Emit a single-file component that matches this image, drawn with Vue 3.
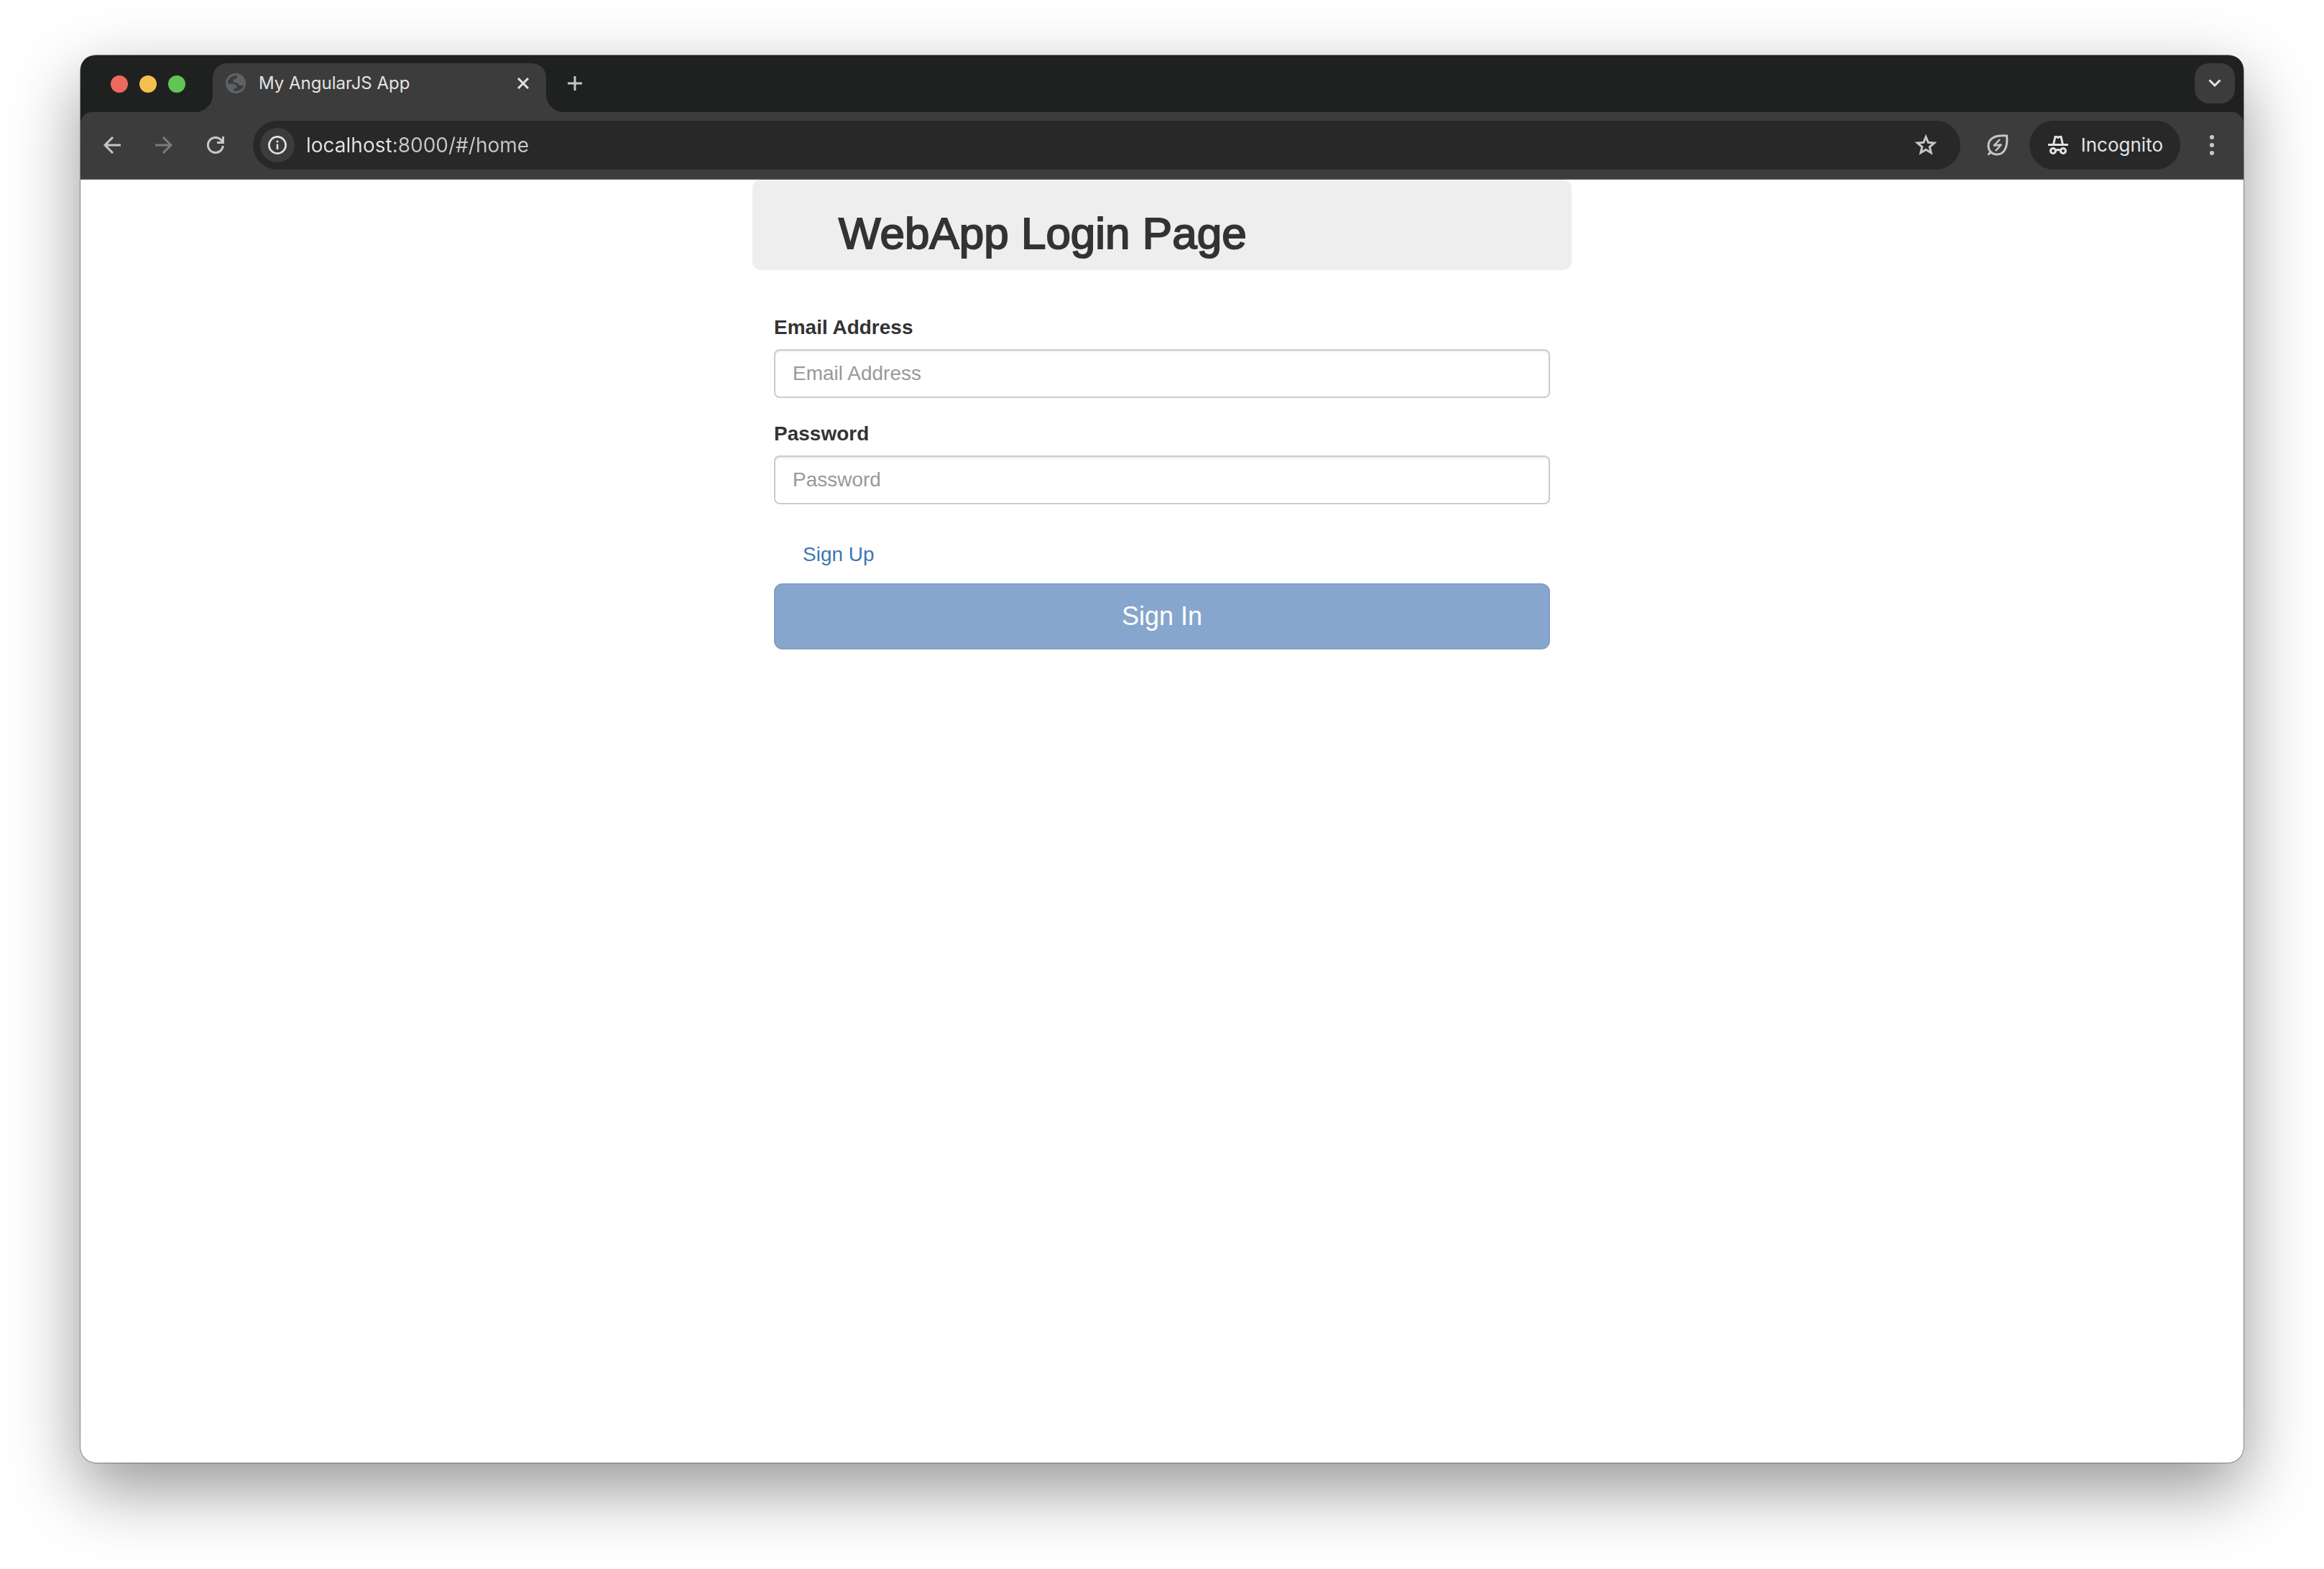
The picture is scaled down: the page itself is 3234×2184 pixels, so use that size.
<script setup>
import { ref } from 'vue'

const address = ref('localhost:8000/#/home')
const email = ref('')
const password = ref('')
</script>

<template>
  <div class="desktop">
    <div class="window">
      <header class="chrome">
        <div class="tab-strip">
          <div class="lights">
            <button class="light red" aria-label="Close window"></button>
            <button class="light yellow" aria-label="Minimize window"></button>
            <button class="light green" aria-label="Zoom window"></button>
          </div>
          <div class="tab">
            <svg class="favicon" viewBox="0 0 28 28" width="28" height="28">
              <circle cx="14" cy="14" r="14" fill="#5f6368" />
              <path d="M16 3.300C9 2.600 4 7 3 12.500L3 14.500H8C12 14.500 15.500 16.500 15.500 19C15.500 21 14 21.500 11 21.500V24.500C19 26 24.500 21 25 16C24 17 22 17.300 20.500 17C17.500 16.500 18.500 14.500 15.500 13.500C12 12.500 10.500 12.500 10.500 10.500C10.500 8.500 12 8 14 7.800C16 7.500 16 5 16 3.300Z" fill="#3c3c3c" />
            </svg>
            <span class="tab-title">My AngularJS App</span>
            <button class="icon-button tab-close" aria-label="Close tab">
              <svg viewBox="0 0 16 16" width="16" height="16"><path d="M1 1L15 15M15 1L1 15" stroke="#e3e3e3" stroke-width="3" /></svg>
            </button>
          </div>
          <button class="icon-button new-tab" aria-label="New tab">
            <svg viewBox="0 0 20 20" width="20" height="20"><path d="M10 0V20M0 10H20" stroke="#c7c7c7" stroke-width="3" /></svg>
          </button>
          <button class="icon-button tab-search" aria-label="Search tabs">
            <svg viewBox="0 0 18 12" width="18" height="12"><path d="M1.500 1.500L9 9L16.500 1.500" fill="none" stroke="#e3e3e3" stroke-width="3" /></svg>
          </button>
        </div>

        <div class="toolbar">
          <button class="icon-button nav" aria-label="Back">
            <svg viewBox="0 0 24 24" width="24" height="24"><path d="M24 12H2M13 1L2 12L13 23" fill="none" stroke="#c7c7c7" stroke-width="3" /></svg>
          </button>
          <button class="icon-button nav" aria-label="Forward">
            <svg viewBox="0 0 24 24" width="24" height="24"><path d="M0 12H22M11 1L22 12L11 23" fill="none" stroke="#7b7b7b" stroke-width="3" /></svg>
          </button>
          <button class="icon-button nav" aria-label="Reload">
            <svg viewBox="0 0 24 24" width="24" height="24">
              <path d="M22.300 13A10.500 10.500 0 1 1 20 5.300L22 8" fill="none" stroke="#c7c7c7" stroke-width="3" />
              <path d="M21 0H24V10H14V7H21Z" fill="#c7c7c7" />
            </svg>
          </button>
          <div class="omnibox">
            <button class="icon-button site-info" aria-label="View site information">
              <svg viewBox="0 0 26 26" width="26" height="26">
                <circle cx="13" cy="13" r="11.600" fill="none" stroke="#e3e3e3" stroke-width="2.600" />
                <path d="M13 11.500V19" stroke="#e3e3e3" stroke-width="2.600" />
                <circle cx="13" cy="8" r="1.600" fill="#e3e3e3" />
              </svg>
            </button>
            <input v-model="address" class="address" type="text" aria-label="Address" spellcheck="false" />
            <button class="icon-button star" aria-label="Bookmark this tab">
              <svg viewBox="0 0 32 30" width="32" height="30">
                <path d="M16 3.500L19.200 11.300L27.700 12L21.200 17.500L23.200 25.700L16 21.300L8.800 25.700L10.800 17.500L4.300 12L12.800 11.300Z" fill="none" stroke="#c7c7c7" stroke-width="3" />
              </svg>
            </button>
          </div>
          <button class="icon-button leaf" aria-label="Energy Saver">
            <svg viewBox="0 0 30 30" width="30" height="30">
              <path d="M27.500 2C14 1 2 4 2 16C2 23 7 28 14 28C26 28 29 14 27.500 2ZM6.500 23.500L1.500 28.500" fill="none" stroke="#c7c7c7" stroke-width="3" />
              <path d="M18 7L9.500 15.800L20 14.200L12 23" fill="none" stroke="#c7c7c7" stroke-width="2.500" stroke-linejoin="bevel" />
            </svg>
          </button>
          <button class="incognito">
            <svg viewBox="0 0 28 28" width="28" height="28">
              <path d="M7.500 13L10 2.500H12L14 3.500L16 2.500H18L20.500 13" fill="none" stroke="#e3e3e3" stroke-width="3" />
              <path d="M0 12H28V15H0Z" fill="#e3e3e3" />
              <circle cx="7" cy="22" r="3.500" fill="none" stroke="#e3e3e3" stroke-width="3" />
              <circle cx="21" cy="22" r="3.500" fill="none" stroke="#e3e3e3" stroke-width="3" />
              <path d="M10.500 21.500Q14 19.500 17.500 21.500" fill="none" stroke="#e3e3e3" stroke-width="3" />
            </svg>
            <span>Incognito</span>
          </button>
          <button class="icon-button menu" aria-label="Menu">
            <svg viewBox="0 0 6 28" width="6" height="28" fill="#c7c7c7">
              <circle cx="3" cy="3" r="3" /><circle cx="3" cy="14" r="3" /><circle cx="3" cy="25" r="3" />
            </svg>
          </button>
        </div>
      </header>

      <main class="page">
        <div class="container">
          <div class="jumbotron">
            <h1>WebApp Login Page</h1>
          </div>
          <form class="login" @submit.prevent>
            <div class="group">
              <label for="email">Email Address</label>
              <input id="email" v-model="email" type="email" placeholder="Email Address" />
            </div>
            <div class="group">
              <label for="password">Password</label>
              <input id="password" v-model="password" type="password" placeholder="Password" />
            </div>
            <p class="signup"><a href="#/register">Sign Up</a></p>
            <button class="signin" type="submit" disabled>Sign In</button>
          </form>
        </div>
      </main>
    </div>
  </div>
</template>

<style>
body {
  margin: 0;
  background: #fff;
}
</style>

<style scoped>
.desktop {
  box-sizing: border-box;
  display: flex;
  min-height: 100vh;
  padding: 77px 112px 148px;
  overflow: hidden;
}
.window {
  display: flex;
  flex: 1;
  flex-direction: column;
  min-width: 0;
  border-radius: 22px;
  background: #fff;
  box-shadow: 0 0 0 1px rgba(0, 0, 0, 0.35), 0 36px 96px rgba(0, 0, 0, 0.42);
}
button {
  margin: 0;
  border: 0;
  padding: 0;
  background: none;
}
svg {
  display: block;
  flex: none;
}
.icon-button {
  display: flex;
  flex: none;
  align-items: center;
  justify-content: center;
}

.chrome {
  border-radius: 20px 20px 0 0;
  background: #1f2120;
  font-family: Inter, sans-serif;
}
.tab-strip {
  display: flex;
  align-items: flex-start;
  height: 68px;
  padding: 11px 12px 0 42px;
}
.lights {
  display: flex;
  gap: 16px;
  margin-right: 38px;
  padding-top: 17px;
}
.light {
  width: 24px;
  height: 24px;
  border-radius: 50%;
}
.red {
  background: #ed6a5e;
}
.yellow {
  background: #f5bf4f;
}
.green {
  background: #61c554;
}
.tab {
  position: relative;
  display: flex;
  box-sizing: border-box;
  align-items: center;
  width: 464px;
  height: 68px;
  padding: 0 18px 12px;
  border-radius: 20px 20px 0 0;
  background: #3c3c3c;
}
.tab::before,
.tab::after {
  position: absolute;
  bottom: 0;
  width: 24px;
  height: 24px;
  content: '';
}
.tab::before {
  right: 100%;
  background: radial-gradient(circle at 0 0, transparent 24px, #3c3c3c 24px);
}
.tab::after {
  left: 100%;
  background: radial-gradient(circle at 100% 0, transparent 24px, #3c3c3c 24px);
}
.tab-title {
  flex: 1;
  margin-left: 18px;
  color: #e3e3e3;
  font-size: 24px;
  line-height: 32px;
  white-space: nowrap;
}
.tab-close {
  width: 28px;
  height: 28px;
}
.new-tab {
  width: 56px;
  height: 56px;
  margin-left: 12px;
}
.tab-search {
  width: 56px;
  height: 56px;
  margin-left: auto;
  border-radius: 20px;
  background: #3c3c3c;
}

.toolbar {
  display: flex;
  align-items: center;
  padding: 12px 20px;
  border-bottom: 2px solid #474747;
  border-radius: 16px 16px 0 0;
  background: #3c3c3c;
}
.nav {
  width: 48px;
  height: 48px;
  margin-right: 24px;
}
.omnibox {
  display: flex;
  flex: 1;
  box-sizing: border-box;
  align-items: center;
  min-width: 0;
  height: 68px;
  margin-left: 4px;
  padding: 0 32px 0 10px;
  border-radius: 34px;
  background: #282828;
}
.site-info {
  width: 48px;
  height: 48px;
  border-radius: 50%;
  background: #3c3c3c;
}
.address {
  flex: 1;
  min-width: 0;
  margin: 0 16px;
  border: 0;
  padding: 0;
  outline: 0;
  background: linear-gradient(90deg, #e3e3e3 120px, #c7c7c7 120px);
  background-clip: text;
  color: transparent;
  font: 28px/40px Inter, sans-serif;
}
.leaf {
  width: 56px;
  height: 56px;
  margin: 0 16px 0 24px;
}
.incognito {
  display: flex;
  flex: none;
  align-items: center;
  gap: 18px;
  height: 68px;
  padding: 0 24px 0 26px;
  border-radius: 34px;
  background: #282828;
  color: #e3e3e3;
  font: 26px/32px Inter, sans-serif;
}
.menu {
  width: 48px;
  height: 48px;
  margin-left: 20px;
}

.page {
  flex: 1;
  font-family: 'Liberation Sans', Arial, sans-serif;
  color: #333;
}
.container {
  max-width: 1140px;
  margin: 0 auto;
}
.jumbotron {
  margin-bottom: 60px;
  padding: 42px 120px 18px;
  border-radius: 12px;
  background: #eee;
}
h1 {
  margin: 0;
  font-size: 62px;
  font-weight: 500;
  line-height: 66px;
  -webkit-text-stroke: 2px #333;
}
.login {
  padding: 0 30px;
}
.group {
  margin-bottom: 30px;
}
label {
  display: block;
  margin-bottom: 10px;
  font-size: 28px;
  font-weight: 700;
  line-height: 40px;
}
.group input {
  display: block;
  box-sizing: border-box;
  width: 100%;
  height: 68px;
  border: 2px solid #ccc;
  border-radius: 8px;
  padding: 12px 24px;
  outline: 0;
  background: #fff;
  box-shadow: inset 0 2px 2px rgba(0, 0, 0, 0.075);
  color: #555;
  font: 28px/40px 'Liberation Sans', Arial, sans-serif;
}
.group input::placeholder {
  color: #999;
  opacity: 1;
}
.signup {
  margin: 50px 40px 20px;
  font-size: 28px;
  line-height: 40px;
}
.signup a {
  color: #3f76b5;
  text-decoration: none;
}
.signin {
  display: block;
  width: 100%;
  border: 2px solid #829fc5;
  border-radius: 12px;
  padding: 20px 32px;
  background: #87a6cd;
  color: #fff;
  font: 36px/48px 'Liberation Sans', Arial, sans-serif;
}
</style>
